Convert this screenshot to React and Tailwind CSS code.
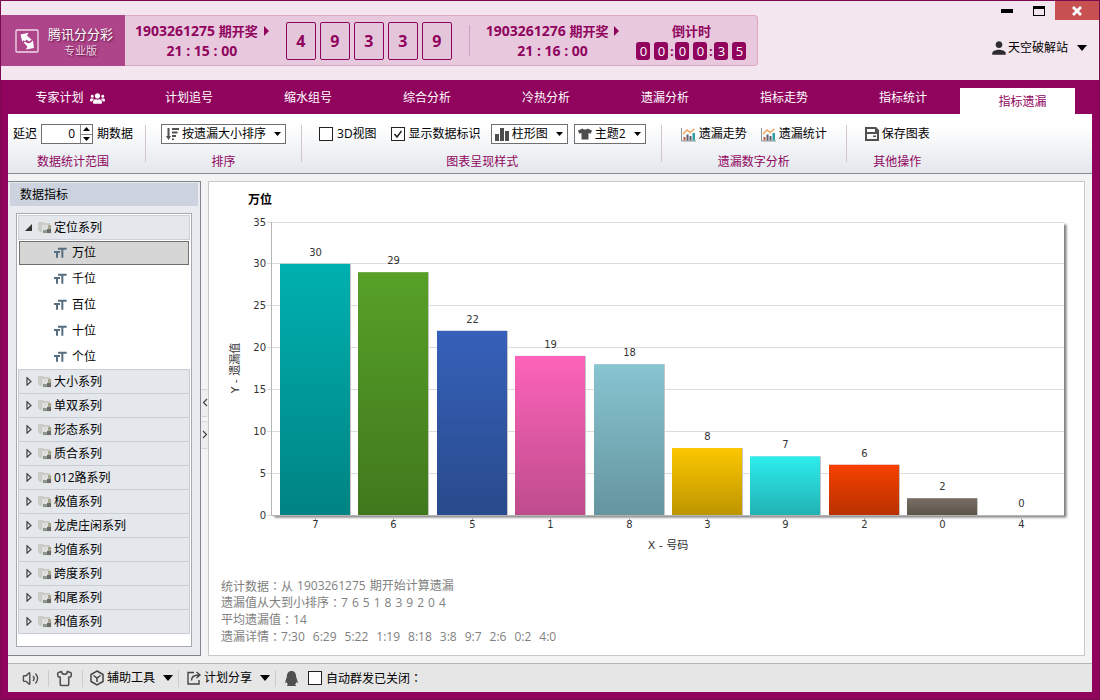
import React, { useState } from "react";
import { Shirt, Volume2 } from "lucide-react";
import { FaQq, FaTshirt, FaUsers } from "react-icons/fa";
import { IoMdPerson } from "react-icons/io";
import { MdFormatSize } from "react-icons/md";

const tabs = ["专家计划", "计划追号", "缩水组号", "综合分析", "冷热分析", "遗漏分析", "指标走势", "指标统计", "指标遗漏"];
const positions = ["万位", "千位", "百位", "十位", "个位"];
const series = ["大小系列", "单双系列", "形态系列", "质合系列", "012路系列", "极值系列", "龙虎庄闲系列", "均值系列", "跨度系列", "和尾系列", "和值系列"];

const bars = [
  { label: "7", value: 30, from: "#00b0b0", to: "#008383" },
  { label: "6", value: 29, from: "#57a128", to: "#41781d" },
  { label: "5", value: 22, from: "#3661ba", to: "#294a8b" },
  { label: "1", value: 19, from: "#fd63b9", to: "#be4c8c" },
  { label: "8", value: 18, from: "#87c5d1", to: "#65959e" },
  { label: "3", value: 8, from: "#fcc700", to: "#bd9500" },
  { label: "9", value: 7, from: "#2deced", to: "#22b2b3" },
  { label: "2", value: 6, from: "#f64100", to: "#b93100" },
  { label: "0", value: 2, from: "#796e63", to: "#5c544b" },
  { label: "4", value: 0, from: "#888888", to: "#666666" },
];

function Caret({ className = "h-[6px] w-[10px]" }) {
  return (
    <svg viewBox="0 0 10 6" preserveAspectRatio="none" className={"shrink-0 fill-black " + className} aria-hidden="true">
      <path d="M0 0h10L5 6z" />
    </svg>
  );
}

function LogoIcon() {
  return (
    <svg viewBox="0 0 24 24" className="size-6 shrink-0" aria-hidden="true">
      <rect x="1" y="1" width="22" height="22" rx="1" fill="none" stroke="#f3dcea" strokeWidth="1.3" />
      <path d="M5.500 5.500L13.500 3.800l-1.500 2.700 4.700 4.300-2.500 1.700-2.700-2-1.500 1.700-1.500-1-1.200 1.600z" fill="#fff" />
      <path d="M19 19l-8.200 1.400 1.700-2.600-3.800-4.300 1.600-.8 2.200 1.500 2.700-.2 1.500-1.300 1.200-1.400z" fill="#fff" />
    </svg>
  );
}

function Draw({ issue, time }) {
  return (
    <div className="flex flex-col items-center text-[14px] leading-5 font-bold whitespace-pre">
      <p className="flex items-center">
        <span>{issue} </span>
        <span className="text-[13px]">期开奖</span>
        <svg viewBox="0 0 5 10" className="ml-1.5 h-[10px] w-[5px] fill-current" aria-hidden="true">
          <path d="M0 0l5 5-5 5z" />
        </svg>
      </p>
      <p>{time}</p>
    </div>
  );
}

function Header() {
  return (
    <header className="flex h-[79px] justify-between bg-[#f4e6ef]">
      <div className="mt-[14px] flex h-[51px] text-[#90045e]">
        <div className="flex w-[124px] items-center gap-[9px] bg-[#ae4489] pl-[14px] text-white">
          <LogoIcon />
          <div className="pt-0.5 text-center [text-shadow:1px_1px_2px_#5a1040]">
            <h1 className="text-[13px] leading-[18px]">腾讯分分彩</h1>
            <p className="text-[11px] leading-4 text-[#f0d5e4]">专业版</p>
          </div>
        </div>
        <div className="flex items-center rounded-r-sm border border-l-0 border-[#dda7c6] bg-[#e7c8dd] pr-[11px] pl-[10px]">
          <Draw issue="1903261275" time="21 : 15 : 00" />
          <ul className="ml-[17px] flex gap-1">
            {["4", "9", "3", "3", "9"].map((d, i) => (
              <li
                key={i}
                className="flex h-[38px] w-[30px] items-center justify-center rounded-xs border border-[#90045e] bg-[#e4c6da] text-[16px] font-bold"
              >
                {d}
              </li>
            ))}
          </ul>
          <div className="mr-4 ml-[17px] h-[31px] w-px bg-[#cf9fbf]" />
          <Draw issue="1903261276" time="21 : 16 : 00" />
          <div className="ml-[17px] flex flex-col items-center gap-px">
            <p className="text-[13px] leading-5 font-bold">倒计时</p>
            <div className="flex text-[13px] leading-[18px]">
              {["00", "00", "35"].map((pair, i) => (
                <React.Fragment key={i}>
                  {i > 0 && <span className="w-[7px] text-center font-bold">:</span>}
                  <span className="flex gap-1 text-white">
                    <span className="w-[14px] rounded-[3px] bg-[#90045e] text-center">{pair[0]}</span>
                    <span className="w-[14px] rounded-[3px] bg-[#90045e] text-center">{pair[1]}</span>
                  </span>
                </React.Fragment>
              ))}
            </div>
          </div>
        </div>
      </div>
      <div className="flex flex-col items-end">
        <div className="flex h-[19px] items-center">
          <button aria-label="最小化" className="flex h-full w-8 items-center justify-center">
            <span className="h-1 w-3 bg-black" />
          </button>
          <button aria-label="最大化" className="flex h-full w-8 items-center justify-center">
            <span className="h-[10px] w-3 border border-t-[3px] border-black" />
          </button>
          <button aria-label="关闭" className="flex h-full w-11 items-center justify-center bg-[#c75050]">
            <svg viewBox="0 0 10 10" className="size-[10px] stroke-white" strokeWidth="2.8" aria-hidden="true">
              <path d="M1 1l8 8M9 1l-8 8" />
            </svg>
          </button>
        </div>
        <button className="mt-4 mr-3 flex items-center text-[12px] leading-6">
          <IoMdPerson className="size-[18px] text-[#2d2d2d]" />
          天空破解站
          <span className="ml-[9px]">
            <Caret />
          </span>
        </button>
      </div>
    </header>
  );
}

function Tabs() {
  return (
    <nav className="grid h-[34px] grid-cols-[repeat(8,119fr)_115fr] pr-6 pl-[7px] text-[12px] text-white">
      {tabs.map((name, i) =>
        i === tabs.length - 1 ? (
          <a key={name} href="#" aria-current="page" className="mt-2 flex items-center justify-center bg-white pt-0.5 pl-[10px] text-[#90045e]">
            {name}
          </a>
        ) : (
          <a key={name} href="#" className="flex items-center justify-center gap-1.5 pt-0.5 pl-[5px]">
            {name}
            {i === 0 && <FaUsers className="size-[15px]" />}
          </a>
        )
      )}
    </nav>
  );
}

function Group({ title, className = "", children }) {
  return (
    <section className={"flex flex-col items-center gap-[10px] " + className}>
      <div className="flex h-5 items-center">{children}</div>
      <h2 className="leading-4 text-[#90045e]">{title}</h2>
    </section>
  );
}

function Divider() {
  return <div className="mt-px h-[37px] w-px bg-[#d5c4cd]" />;
}

function Combo({ icon, label, options, className }) {
  return (
    <div className={"relative h-5 border border-[#707070] bg-white " + className}>
      <span className="pointer-events-none absolute inset-y-0 left-[3px] flex items-center text-[#4d4d4d]">{icon}</span>
      <select aria-label={label} className="block h-full w-full appearance-none bg-transparent pl-5 leading-[18px] outline-none">
        {options.map((o) => (
          <option key={o}>{o}</option>
        ))}
      </select>
      <span className="pointer-events-none absolute inset-y-0 right-1 flex items-center">
        <Caret className="h-1 w-[7px]" />
      </span>
    </div>
  );
}

function Check({ label, checked, onChange, className = "" }) {
  return (
    <label className={"flex items-center gap-1 " + className}>
      <span className="relative flex size-[14px]">
        <input type="checkbox" checked={checked} onChange={onChange} className="size-[14px] appearance-none border border-[#222] bg-white" />
        {checked && (
          <svg viewBox="0 0 14 14" className="pointer-events-none absolute inset-0" fill="none" stroke="#222" strokeWidth="1.5" aria-hidden="true">
            <path d="M3.500 7l2.500 3L10.500 4" />
          </svg>
        )}
      </span>
      {label}
    </label>
  );
}

function SortIcon() {
  return (
    <svg viewBox="0 0 14 14" className="size-[14px] fill-[#505050]" aria-hidden="true">
      <path d="M2.500 1h2v8H6l-2.500 4L1 9h1.500zM7 1h7v2H7zM7 4.500h5.500v2H7zM7 8h4v2H7zM7 11.500h2v1.500H7z" />
    </svg>
  );
}

function ColumnIcon() {
  return (
    <svg viewBox="0 0 14 14" className="size-[14px] fill-[#4d4d4d]" aria-hidden="true">
      <path d="M0 7h4v7H0zM5 1h4v13H5zM10 4h4v10h-4z" />
    </svg>
  );
}

function TrendIcon() {
  return (
    <svg viewBox="0 0 15 15" className="mr-[3px] size-[15px]" fill="none" aria-hidden="true">
      <path d="M.5 1v13H15" stroke="#8d979e" />
      <path d="M2.500 10h2v3.500h-2z" fill="#c65b45" />
      <path d="M5.500 7.500h2v6h-2zM8.500 9h2v4.500h-2z" fill="#5c5f68" />
      <path d="M11.500 6h2.500v7.500h-2.500z" fill="#2f9fa0" />
      <path d="M2 7l4-4 3 2.500L13.500 2" stroke="#eda35c" strokeWidth="1.4" />
    </svg>
  );
}

function SaveIcon() {
  return (
    <svg viewBox="0 0 14 14" className="mr-[3px] size-[14px]" aria-hidden="true">
      <path fillRule="evenodd" fill="#505050" d="M0 0h11l3 3v11H0zM2 2v3h8V2zM2 7v5h10V7z" />
      <path d="M8 8.500h3V10H8zM10 2l2 2v2h-2z" fill="#505050" />
    </svg>
  );
}

function Ribbon() {
  const [threeD, setThreeD] = useState(false);
  const [marks, setMarks] = useState(true);
  const [delay, setDelay] = useState(0);
  return (
    <div className="flex h-[60px] shrink-0 border-b border-[#858d98] bg-linear-to-b from-white from-20% to-[#e3e7ec] pt-[10px] whitespace-nowrap">
      <Group title="数据统计范围" className="pr-3 pl-[5px]">
        <label htmlFor="delay">延迟</label>
        <span className="mx-1 flex h-5 w-[52px] border border-[#707070] bg-white">
          <input
            id="delay"
            value={delay}
            onChange={(e) => setDelay(Number(e.target.value) || 0)}
            className="w-full min-w-0 pr-[5px] text-right outline-none"
          />
          <span className="flex w-3 shrink-0 flex-col divide-y divide-[#8a8a8a] border-l border-[#8a8a8a]">
            <button aria-label="增加" className="flex flex-1 items-center justify-center" onClick={() => setDelay(delay + 1)}>
              <Caret className="h-1 w-[7px] rotate-180" />
            </button>
            <button aria-label="减少" className="flex flex-1 items-center justify-center" onClick={() => setDelay(Math.max(0, delay - 1))}>
              <Caret className="h-1 w-[7px]" />
            </button>
          </span>
        </span>
        <span>期数据</span>
      </Group>
      <Divider />
      <Group title="排序" className="px-[15px]">
        <Combo icon={<SortIcon />} label="排序" options={["按遗漏大小排序", "按号码排序"]} className="w-[125px]" />
      </Group>
      <Divider />
      <Group title="图表呈现样式" className="pr-[15px] pl-[17px]">
        <Check label="3D视图" checked={threeD} onChange={() => setThreeD(!threeD)} />
        <Check label="显示数据标识" checked={marks} onChange={() => setMarks(!marks)} className="mr-[10px] ml-[14px]" />
        <Combo icon={<ColumnIcon />} label="图表类型" options={["柱形图", "折线图"]} className="mr-1.5 w-[77px]" />
        <Combo icon={<FaTshirt className="size-[14px]" />} label="主题" options={["主题2", "主题1"]} className="w-[72px]" />
      </Group>
      <Divider />
      <Group title="遗漏数字分析" className="px-[19px]">
        <button className="flex items-center">
          <TrendIcon />
          遗漏走势
        </button>
        <button className="ml-[14px] flex items-center">
          <TrendIcon />
          遗漏统计
        </button>
      </Group>
      <Divider />
      <Group title="其他操作" className="px-[18px]">
        <button className="flex items-center">
          <SaveIcon />
          保存图表
        </button>
      </Group>
    </div>
  );
}

function FolderIcon() {
  return (
    <svg viewBox="0 0 14 13" className="h-[13px] w-[14px] shrink-0" aria-hidden="true">
      <path d="M0 1h5l1 1h6v9H2L0 9z" fill="#cbcbc8" />
      <path d="M4 4h10v9H4z" fill="#dededb" />
      <path d="M10 4h3v4h-3z" fill="#a8a890" />
      <path d="M5 9h4v3H5z" fill="#8c9a90" />
      <path d="M9 8h4v4H9z" fill="#6c6c6c" />
    </svg>
  );
}

function Sidebar() {
  const [selected, setSelected] = useState("万位");
  return (
    <aside className="flex w-[193px] shrink-0 flex-col border border-l-0 border-[#80868f] bg-[#e9ebf1] pr-0.5">
      <h2 className="mt-px ml-0.5 h-[23px] bg-[#cdd3de] pl-[10px] leading-[23px]">数据指标</h2>
      <div className="mt-[7px] mr-1.5 mb-2 ml-2 flex-1 border border-[#a5abb3] bg-white px-px pt-px">
        <button className="flex h-[25px] w-full items-center border border-[#cdd1d7] bg-[#e4e7ec] pl-1.5">
          <svg viewBox="0 0 7 7" className="size-[7px]" aria-hidden="true">
            <path d="M7 0v7H0z" fill="#333" />
          </svg>
          <span className="mr-0.5 ml-1.5">
            <FolderIcon />
          </span>
          定位系列
        </button>
        <ul className="px-px pt-px">
          {positions.map((name) => (
            <li key={name} className="h-[26px]">
              <button
                onClick={() => setSelected(name)}
                className={
                  "flex h-6 w-full items-center gap-1 border pl-8 " +
                  (selected === name ? "border-[#707070] bg-[#d6d6d6]" : "border-transparent")
                }
              >
                <MdFormatSize className="size-4 text-[#566d80]" />
                {name}
              </button>
            </li>
          ))}
        </ul>
        <ul className="-mt-0.5 border-t border-[#c9cdd3]">
          {series.map((name) => (
            <li key={name}>
              <button className="flex h-6 w-full items-center border-x border-b border-[#c9cdd3] bg-[#e4e7ec] pl-[7px]">
                <svg viewBox="0 0 6 9" className="h-[9px] w-1.5 shrink-0" aria-hidden="true">
                  <path d="M1 .8l4 3.700-4 3.700z" fill="none" stroke="#444" strokeWidth="1.2" />
                </svg>
                <span className="mr-0.5 ml-1.5">
                  <FolderIcon />
                </span>
                {name}
              </button>
            </li>
          ))}
        </ul>
      </div>
    </aside>
  );
}

function Splitter() {
  return (
    <div className="flex w-[7px] shrink-0 flex-col items-center justify-center gap-1">
      {["M5 1L1.500 4.500 5 8", "M1 1l3.500 3.500L1 8"].map((d, i) => (
        <button key={d} aria-label={i ? "展开" : "收起"} className="flex h-7 w-full items-center justify-center rounded-xs border-y border-[#d4d4d4] bg-[#eeeeee]">
          <svg viewBox="0 0 6 9" className="h-[9px] w-1.5 shrink-0" aria-hidden="true">
            <path d={d} fill="none" stroke="#444" strokeWidth="1.2" />
          </svg>
        </button>
      ))}
    </div>
  );
}

const plot = { left: 63, right: 855, top: 13, base: 306 };
const yOf = (v) => plot.base - ((plot.base - plot.top) * v) / 35;
const xOf = (i) => Math.round(71 + i * 78.4);

function Chart() {
  return (
    <svg viewBox="0 0 875 346" className="block w-full font-['DejaVu_Sans','Noto_Sans_CJK_SC',sans-serif]" fill="#333" role="img" aria-label="万位遗漏值柱形图">
      <defs>
        {bars.map((b) => (
          <linearGradient key={b.label} id={"bar" + b.label} x1="0" y1="0" x2="0" y2="1">
            <stop offset="0" stopColor={b.from} />
            <stop offset="1" stopColor={b.to} />
          </linearGradient>
        ))}
        <filter id="plotShadow" x="-5%" y="-5%" width="110%" height="110%">
          <feDropShadow dx="2.500" dy="2.500" stdDeviation="1.3" floodColor="#000" floodOpacity="0.5" />
        </filter>
      </defs>
      <rect x={plot.left} y={plot.top} width={plot.right - plot.left} height={plot.base - plot.top} fill="#fff" filter="url(#plotShadow)" />
      {[0, 5, 10, 15, 20, 25, 30, 35].map((v) => (
        <g key={v}>
          <line x1={plot.left - 5} x2={plot.right} y1={Math.floor(yOf(v)) + 0.5} y2={Math.floor(yOf(v)) + 0.5} stroke="#dcdcdc" />
          <text x="57" y={Math.floor(yOf(v)) + 4} textAnchor="end" fontSize="10">
            {v}
          </text>
        </g>
      ))}
      {bars.map((b, i) => (
        <g key={b.label} textAnchor="middle" fontSize="10">
          {b.value > 0 && (
            <>
              <rect x={xOf(i) + 1} y={yOf(b.value)} width="70" height={plot.base - yOf(b.value)} fill="#c4c4c4" />
              <rect x={xOf(i)} y={yOf(b.value)} width="70" height={plot.base - yOf(b.value)} fill={"url(#bar" + b.label + ")"} />
            </>
          )}
          <text x={xOf(i) + 35.5} y={Math.round(yOf(b.value)) - 8}>
            {b.value}
          </text>
          <line x1={xOf(i) + 35.5} x2={xOf(i) + 35.5} y1={plot.base} y2={plot.base + 5} stroke="#b0b0b0" />
          <text x={xOf(i) + 35.5} y={plot.base + 13}>
            {b.label}
          </text>
        </g>
      ))}
      <path d={`M${plot.left - 0.5} ${plot.top}V${plot.base + 0.5}H${plot.right}`} fill="none" stroke="#b5b5b5" />
      <text x="459" y="340" textAnchor="middle" fontSize="11">
        X - 号码
      </text>
      <text transform="translate(30 159) rotate(-90)" textAnchor="middle" fontSize="11">
        Y - 遗漏值
      </text>
    </svg>
  );
}

function Colon() {
  return <span className="font-['Noto_Sans_CJK_TC',sans-serif]">：</span>;
}

const order = bars.map((b) => b.label);
const details = bars.map((b) => b.label + ":" + b.value);

function Content() {
  return (
    <main className="min-w-0 flex-1 border border-[#c8c8c8] bg-white">
      <h2 className="pt-[9px] pl-[39px] leading-[18px] font-bold">万位</h2>
      <Chart />
      <div className="pt-[22px] pb-[10px] pl-3 leading-[17px] text-[#808080]">
        <p className="flex h-[17px] gap-1">
          <span>
            统计数据
            <Colon />从
          </span>
          <span>1903261275</span>
          <span>期开始计算遗漏</span>
        </p>
        <p className="flex h-[17px]">
          遗漏值从大到小排序
          <Colon />
          <span className="flex gap-1">
            {order.map((n) => (
              <span key={n}>{n}</span>
            ))}
          </span>
        </p>
        <p className="flex h-[17px]">
          平均遗漏值
          <Colon />
          14
        </p>
        <p className="flex h-[17px]">
          遗漏详情
          <Colon />
          <span className="flex gap-2">
            {details.map((n) => (
              <span key={n}>{n}</span>
            ))}
          </span>
        </p>
      </div>
    </main>
  );
}

function FooterRule() {
  return <div className="h-[17px] w-px bg-[#cccccc]" />;
}

function Footer() {
  const [auto, setAuto] = useState(false);
  return (
    <footer className="flex h-[29px] shrink-0 items-center border-t border-[#b4b4b4] bg-[#e6e6e6] pl-[14px] whitespace-nowrap">
      <button aria-label="声音" className="mr-[9px]">
        <Volume2 className="size-[17px] text-[#505050]" strokeWidth={2} />
      </button>
      <FooterRule />
      <button aria-label="皮肤" className="mr-[9px] ml-[7px]">
        <Shirt className="size-[17px] text-[#505050]" strokeWidth={2.2} />
      </button>
      <FooterRule />
      <button className="mr-[5px] ml-[7px] flex items-center">
        <svg viewBox="0 0 14 16" className="mr-[3px] h-4 w-[14px]" fill="none" stroke="#444" strokeWidth="1.5" aria-hidden="true">
          <path d="M7 1l6 3.500v7L7 15l-6-3.500v-7zM3.500 5.500L7 8l3.500-2.500M7 8v4" />
        </svg>
        辅助工具
        <span className="ml-2">
          <Caret />
        </span>
      </button>
      <FooterRule />
      <button className="mr-[5px] ml-2 flex items-center">
        <svg viewBox="0 0 14 14" className="mr-[3px] size-[14px]" fill="none" stroke="#444" strokeWidth="1.4" aria-hidden="true">
          <path d="M7 1.500H1v11.500h11V9M4.500 9.500c0-3.500 2.500-5.500 7.500-5.500M9.500 1L13 4 9.500 7" />
        </svg>
        计划分享
        <span className="ml-2">
          <Caret />
        </span>
      </button>
      <FooterRule />
      <FaQq className="mr-[9px] ml-2 size-[15px] text-[#505050]" />
      <Check
        label={
          <span>
            自动群发已关闭
            <Colon />
          </span>
        }
        checked={auto}
        onChange={() => setAuto(!auto)}
      />
    </footer>
  );
}

export default function App() {
  return (
    <div className="flex min-h-screen flex-col border border-[#7c0a50] bg-[#90045e] font-['Open_Sans','Noto_Sans_CJK_SC',sans-serif] text-[12px] text-black">
      <Header />
      <Tabs />
      <div className="mx-[7px] mb-[7px] flex flex-1 flex-col bg-[#f3f3f4]">
        <Ribbon />
        <div className="flex flex-1 pt-[7px] pr-[7px] pb-[7px]">
          <Sidebar />
          <Splitter />
          <Content />
        </div>
        <Footer />
      </div>
    </div>
  );
}
